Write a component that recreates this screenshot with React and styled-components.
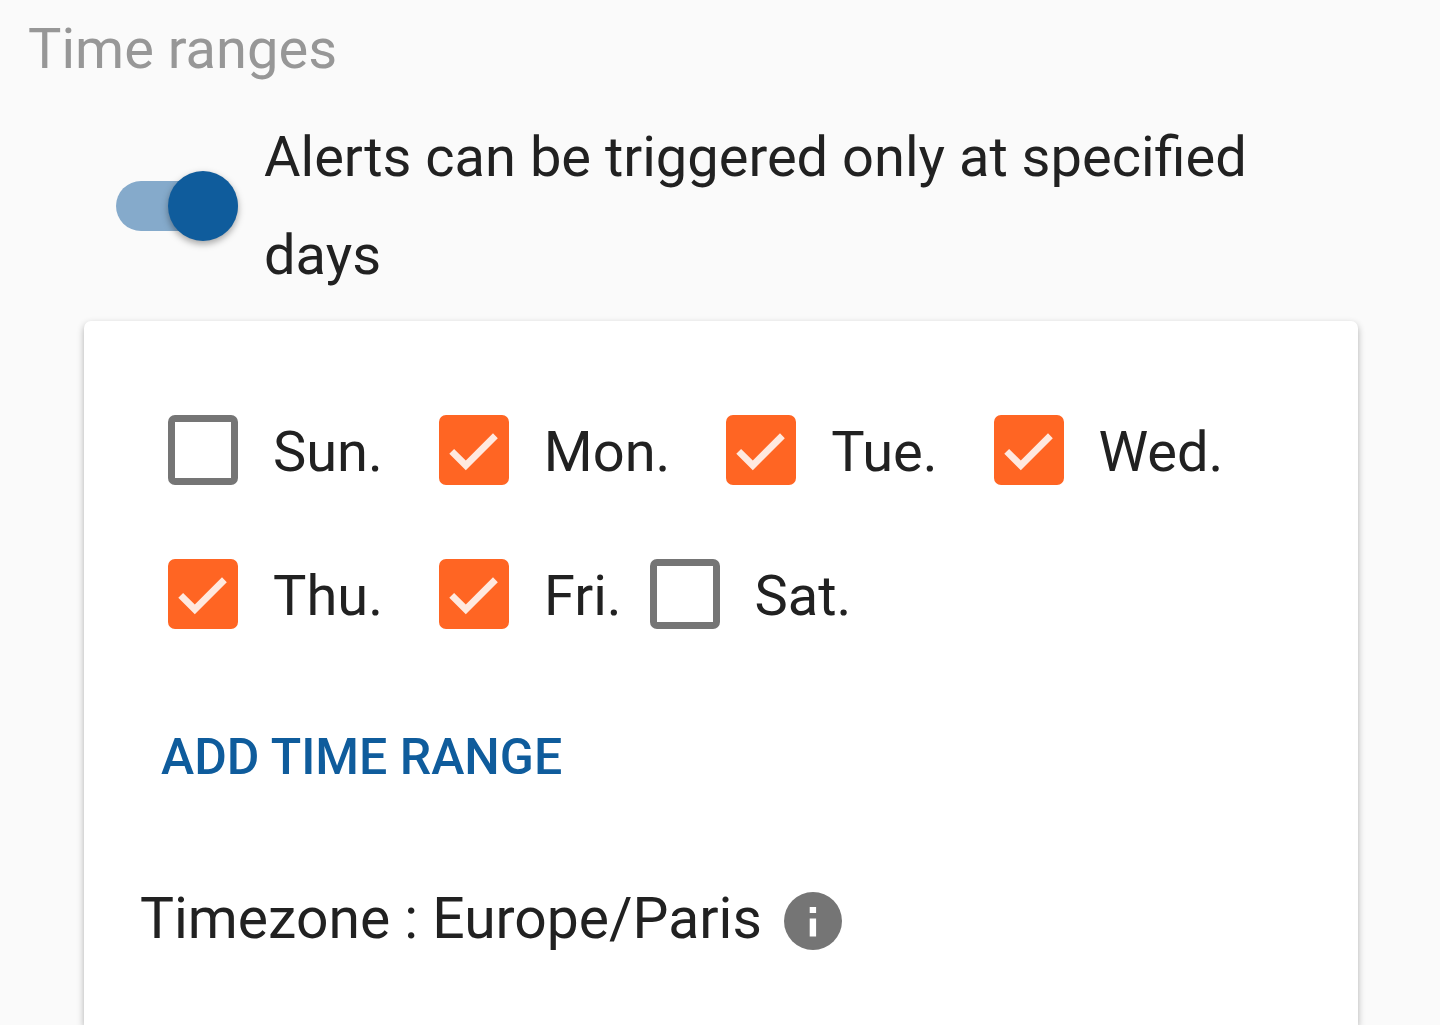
import * as React from 'react';
import styled, { createGlobalStyle } from 'styled-components';


const color = {
  page: '#fafafa',
  text: '#212121',
  muted: '#979797',
  primary: '#0f5c9c',
  track: '#85aacb',
  accent: '#ff6523',
  tick: '#ffe9df',
  outline: '#757575',
};

const GlobalStyle = createGlobalStyle`
  * {
    box-sizing: border-box;
  }

  body {
    margin: 0;
    background: ${color.page};
    color: ${color.text};
    font-family: Roboto, sans-serif;
    font-size: 56px;
    line-height: 98px;
  }
`;

const Page = styled.main`
  display: flex;
  flex-direction: column;
  min-height: 100vh;
`;

const Title = styled.h1`
  margin: 0;
  padding: 0 28px;
  color: ${color.muted};
  font-size: 56px;
  font-weight: 400;
`;

const SwitchRow = styled.label`
  display: flex;
  align-items: center;
  gap: 26px;
  margin-top: 10px;
  padding: 0 116px;
  cursor: pointer;
`;

const Switch = styled.input`
  appearance: none;
  display: flex;
  flex-shrink: 0;
  align-items: center;
  justify-content: ${props => props.checked ? 'flex-end' : 'flex-start'};
  width: 122px;
  height: 50px;
  margin: 0;
  border-radius: 25px;
  background: ${props => props.checked ? color.track : '#9e9e9e'};
  cursor: pointer;

  &::before {
    content: '';
    flex-shrink: 0;
    width: 70px;
    height: 70px;
    border-radius: 50%;
    background: ${props => props.checked ? color.primary : color.page};
    box-shadow: 0 3px 7px rgba(0, 0, 0, 0.35);
  }
`;

const Card = styled.section`
  flex-grow: 1;
  display: flex;
  flex-direction: column;
  align-items: flex-start;
  margin: 17px 82px 0 84px;
  padding: 57px 56px 0;
  border-radius: 7px 7px 0 0;
  background: #fff;
  box-shadow: 0 3px 7px rgba(0, 0, 0, 0.3);
`;

const Days = styled.div`
  display: flex;
  flex-wrap: wrap;
  padding-left: 28px;
`;

const Day = styled.label`
  display: flex;
  align-items: center;
  gap: 35px;
  height: 144px;
  margin-right: ${props => props.$isCompact ? '28px' : '56px'};
  cursor: pointer;
`;

const DayName = styled.span`
  padding-top: 4px;
`;

const DayBox = styled.span`
  display: grid;
  width: 70px;
  height: 70px;

  input,
  svg {
    grid-area: 1 / 1;
  }

  svg {
    pointer-events: none;
  }
`;

const Checkbox = styled.input`
  appearance: none;
  width: 70px;
  height: 70px;
  margin: 0;
  border: 7px solid ${props => props.checked ? color.accent : color.outline};
  border-radius: 7px;
  background: ${props => props.checked ? color.accent : '#fff'};
  cursor: pointer;
`;

const AddButton = styled.button`
  margin-top: 42px;
  padding: 0 21px;
  border: 0;
  background: none;
  color: ${color.primary};
  font-family: inherit;
  font-size: 50px;
  font-weight: 500;
  line-height: 98px;
  text-transform: uppercase;
  cursor: pointer;
`;

const Timezone = styled.div`
  display: flex;
  align-items: center;
  gap: 22px;
  margin-top: 64px;
  font-size: 57px;
`;

const InfoButton = styled.button`
  display: flex;
  padding: 4px 0 0;
  border: 0;
  background: none;
  cursor: help;
`;

const week = [
  { name: 'Sun.', isActive: false },
  { name: 'Mon.', isActive: true },
  { name: 'Tue.', isActive: true },
  { name: 'Wed.', isActive: true },
  { name: 'Thu.', isActive: true },
  { name: 'Fri.', isActive: true, isCompact: true },
  { name: 'Sat.', isActive: false },
];

const DayCheckbox = ({ name, isActive, isCompact, onChange }) => (
  <Day $isCompact={ isCompact }>
    <DayBox>
      <Checkbox type="checkbox" checked={ isActive } onChange={ onChange }/>
      {
        isActive &&
        <svg width="70" height="70" viewBox="0 0 70 70" aria-hidden="true">
          <path d="M10.3 38.8 L26.8 55.3 L58.8 23.2 L54 18.2 L26.8 45.4 L15.1 33.9 Z" fill={ color.tick }/>
        </svg>
      }
    </DayBox>
    <DayName>{ name }</DayName>
  </Day>
);

export default function App() {
  const [isLimited, setLimited] = React.useState(true);
  const [days, setDays] = React.useState(week);

  const toggleDay = (name) => {
    setDays(days.map(day => day.name === name ? { ...day, isActive: !day.isActive } : day));
  };

  return (
    <Page>
      <GlobalStyle/>
      <Title>Time ranges</Title>
      <SwitchRow>
        <Switch type="checkbox" role="switch" checked={ isLimited } onChange={ () => setLimited(!isLimited) }/>
        <span>Alerts can be triggered only at specified days</span>
      </SwitchRow>
      <Card>
        <Days>
          { days.map(day => <DayCheckbox key={ day.name } { ...day } onChange={ () => toggleDay(day.name) }/>) }
        </Days>
        <AddButton type="button">Add time range</AddButton>
        <Timezone>
          <span>Timezone : Europe/Paris</span>
          <InfoButton type="button" aria-label="About the timezone">
            <svg width="58" height="58" viewBox="0 0 58 58" aria-hidden="true">
              <circle cx="29" cy="29" r="29" fill={ color.outline }/>
              <path d="M25.7 15h6.4v6h-6.4zM25.7 26.5h6.4v18h-6.4z" fill="#fff"/>
            </svg>
          </InfoButton>
        </Timezone>
      </Card>
    </Page>
  );
}
